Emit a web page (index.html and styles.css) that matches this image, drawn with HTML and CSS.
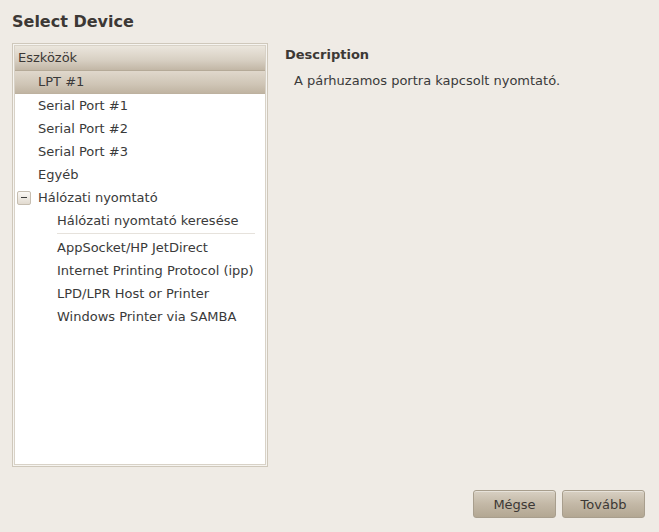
FILE: index.html
```html
<!DOCTYPE html>
<html lang="hu">
<head>
    <meta charset="UTF-8">
    <title>Select Device</title>
    <link rel="stylesheet" href="styles.css">
</head>
<body>
    <div class="dialog">
        <h1 class="title">Select Device</h1>

        <div class="main">
            <!-- eszközlista -->
            <div class="device-list">
                <div class="list-inner">
                    <div class="list-header">Eszközök</div>
                    <div class="row selected">LPT #1</div>
                    <div class="row">Serial Port #1</div>
                    <div class="row">Serial Port #2</div>
                    <div class="row">Serial Port #3</div>
                    <div class="row">Egyéb</div>
                    <div class="row parent">
                        <span class="expander"><span class="minus"></span></span>
                        Hálózati nyomtató
                    </div>
                    <div class="row child">Hálózati nyomtató keresése</div>
                    <div class="separator"></div>
                    <div class="row child">AppSocket/HP JetDirect</div>
                    <div class="row child">Internet Printing Protocol (ipp)</div>
                    <div class="row child">LPD/LPR Host or Printer</div>
                    <div class="row child">Windows Printer via SAMBA</div>
                </div>
            </div>

            <!-- leírás -->
            <div class="description">
                <div class="desc-title">Description</div>
                <div class="desc-text">A párhuzamos portra kapcsolt nyomtató.</div>
            </div>
        </div>

        <div class="buttons">
            <button class="btn">Mégse</button>
            <button class="btn">Tovább</button>
        </div>
    </div>
</body>
</html>
```

FILE: styles.css
```css
body {
    margin: 0;
    padding: 0;
    background: #efebe5;
    font-family: "DejaVu Sans", "Noto Sans", sans-serif;
    font-size: 13px;
    color: #3c3c3c;
}

.dialog {
    width: 659px;
    height: 532px;
    box-sizing: border-box;
    padding: 12px 14px 14px 12px;
    display: flex;
    flex-direction: column;
}

.title {
    margin: 0;
    font-size: 16px;
    font-weight: bold;
    line-height: 20px;
    color: #3c3835;
}

.main {
    display: flex;
    gap: 17px;
    margin-top: 11px;
}

.device-list {
    width: 256px;
    height: 424px;
    box-sizing: border-box;
    border: 1px solid #cfc8bb;
    padding: 1px;
    background: #f6f4f0;
}

.list-inner {
    height: 100%;
    box-sizing: border-box;
    border: 1px solid #d8d2c7;
    background: #ffffff;
}

.list-header {
    height: 24px;
    line-height: 24px;
    padding-left: 3px;
    background: linear-gradient(#ebe6dd, #d7cfc2 60%, #c2b7a6);
    border-bottom: 1px solid #b5aa98;
    color: #3c3835;
}

.row {
    height: 23px;
    line-height: 23px;
    padding-left: 23px;
    white-space: nowrap;
    color: #3a3a3a;
}

.row.selected {
    background: linear-gradient(#e0d8cc, #cfc5b6 60%, #c0b4a2);
    border-bottom: 1px solid #bdb19f;
    height: 22px;
    line-height: 22px;
}

.row.parent {
    display: flex;
    align-items: center;
    padding-left: 2px;
    gap: 7px;
}

.expander {
    width: 12px;
    height: 12px;
    border: 1px solid #c6beb1;
    border-radius: 2px;
    background: linear-gradient(#faf8f5, #e2dbd0);
    display: flex;
    align-items: center;
    justify-content: center;
}

.minus {
    width: 6px;
    height: 1px;
    background: #3c3c3c;
}

.row.child {
    padding-left: 42px;
}

.separator {
    height: 1px;
    margin: 1px 10px 2px 42px;
    background: #e6e2dc;
}

.description {
    padding-top: 3px;
}

.desc-title {
    font-weight: bold;
    color: #3c3835;
    line-height: 18px;
}

.desc-text {
    margin-top: 8px;
    padding-left: 9px;
    line-height: 18px;
    color: #3a3a3a;
}

.buttons {
    margin-top: auto;
    display: flex;
    justify-content: flex-end;
    gap: 6px;
}

.btn {
    width: 83px;
    height: 28px;
    font-family: inherit;
    font-size: 13px;
    color: #3c3835;
    border: 1px solid #a89e8d;
    border-radius: 3px;
    background: linear-gradient(#d8d0c3, #c3b8a6 50%, #b3a793);
    box-shadow: inset 0 1px 0 rgba(255, 255, 255, 0.4);
    padding: 0;
}
```
